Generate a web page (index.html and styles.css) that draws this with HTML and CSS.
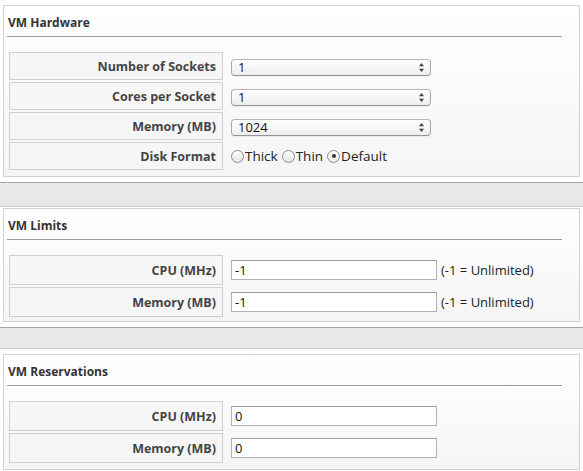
FILE: index.html
```html
<!DOCTYPE html>
<html>
<head>
<meta charset="utf-8">
<link rel="stylesheet" href="styles.css">
</head>
<body>
<div class="section first">
  <div class="panel">
    <div class="heading">VM Hardware</div>
    <table class="form hw">
      <tr>
        <td class="label">Number of Sockets</td>
        <td class="value"><span class="sel"><select><option>1</option></select><svg class="arrows" width="5" height="9" viewBox="0 0 5 9"><path d="M2.5 0 L5 3.2 L0 3.2 Z M0 5.8 L5 5.8 L2.5 9 Z" fill="#444"/></svg></span></td>
      </tr>
      <tr>
        <td class="label">Cores per Socket</td>
        <td class="value"><span class="sel"><select><option>1</option></select><svg class="arrows" width="5" height="9" viewBox="0 0 5 9"><path d="M2.5 0 L5 3.2 L0 3.2 Z M0 5.8 L5 5.8 L2.5 9 Z" fill="#444"/></svg></span></td>
      </tr>
      <tr>
        <td class="label">Memory (MB)</td>
        <td class="value"><span class="sel"><select><option>1024</option></select><svg class="arrows" width="5" height="9" viewBox="0 0 5 9"><path d="M2.5 0 L5 3.2 L0 3.2 Z M0 5.8 L5 5.8 L2.5 9 Z" fill="#444"/></svg></span></td>
      </tr>
      <tr>
        <td class="label">Disk Format</td>
        <td class="value radios"><label><input type="radio" name="df">Thick</label><label><input type="radio" name="df">Thin</label><label><input type="radio" name="df" checked>Default</label></td>
      </tr>
    </table>
  </div>
</div>
<div class="section second">
  <div class="panel">
    <div class="heading">VM Limits</div>
    <table class="form tx">
      <tr>
        <td class="label">CPU (MHz)</td>
        <td class="value"><input class="text" type="text" value="-1"><span class="hint">(-1 = Unlimited)</span></td>
      </tr>
      <tr>
        <td class="label">Memory (MB)</td>
        <td class="value"><input class="text" type="text" value="-1"><span class="hint">(-1 = Unlimited)</span></td>
      </tr>
    </table>
  </div>
</div>
<div class="section third">
  <div class="panel">
    <div class="heading">VM Reservations</div>
    <table class="form tx">
      <tr>
        <td class="label">CPU (MHz)</td>
        <td class="value"><input class="text" type="text" value="0"></td>
      </tr>
      <tr>
        <td class="label">Memory (MB)</td>
        <td class="value"><input class="text" type="text" value="0"></td>
      </tr>
    </table>
  </div>
</div>
</body>
</html>
```
FILE: styles.css
```css
html, body {
  margin: 0;
  padding: 0;
}
body {
  background: #e8e8e8;
  font-family: "Open Sans", "DejaVu Sans", sans-serif;
  font-size: 13px;
  color: #333;
  width: 583px;
  height: 471px;
  overflow: hidden;
}
.section {
  background: #fff;
  padding: 5px 3px 5px 3px;
}
.section.first {
  border-bottom: 1px solid #a4a4a4;
}
.section.second {
  margin-top: 23px;
  border-top: 1px solid #cacaca;
  border-bottom: 1px solid #a4a4a4;
  padding-top: 1px;
}
.section.second .panel {
  padding-bottom: 2px;
}
.section.third {
  margin-top: 20px;
  border-top: 1px solid #cacaca;
  padding-top: 5px;
}
.panel {
  border: 1px solid #d2d2d2;
  background: linear-gradient(#ffffff, #f5f5f5);
  padding: 0 3px 4px 3px;
}
.heading {
  font-weight: bold;
  font-size: 12px;
  line-height: 16px;
  color: #333;
  padding: 9px 0 5px 1px;
  margin-right: 14px;
  border-bottom: 1px solid #9a9a9a;
}
.form {
  border-collapse: separate;
  border-spacing: 2px;
  margin-top: 13px;
}
.label {
  width: 206px;
  min-width: 206px;
  border: 1px solid #d0d0d0;
  background: #f6f6f6;
  text-align: right;
  font-weight: bold;
  font-size: 12.5px;
  color: #444;
  padding: 0 6px 0 0;
  white-space: nowrap;
}
.hw .label { height: 26px; }
.tx .label { height: 28px; }
.value {
  padding: 0 0 0 6px;
  white-space: nowrap;
  vertical-align: middle;
}
.sel {
  position: relative;
  display: inline-block;
  vertical-align: middle;
}
.sel select {
  -webkit-appearance: none;
  appearance: none;
  width: 200px;
  height: 17px;
  margin: 0;
  padding: 0 0 0 6px;
  border: 1px solid #a8a8a8;
  border-top-color: #b4b4b4;
  border-bottom-color: #959595;
  border-radius: 4px;
  background: linear-gradient(#ffffff, #ededed);
  font-family: "Open Sans", "DejaVu Sans", sans-serif;
  font-size: 13px;
  line-height: 15px;
  color: #111;
  box-shadow: 0 1px 0 rgba(0,0,0,0.04);
  display: block;
}
.sel .arrows {
  position: absolute;
  right: 7px;
  top: 4px;
  pointer-events: none;
}
.radios {
  display: flex;
  align-items: center;
  gap: 4px;
  height: 28px;
}
.radios label {
  display: inline-flex;
  align-items: center;
  gap: 1px;
  color: #222;
  font-size: 13.5px;
}
.radios input {
  -webkit-appearance: none;
  appearance: none;
  width: 13px;
  height: 13px;
  margin: 0;
  border: 1px solid #8c8c8c;
  border-radius: 50%;
  background: linear-gradient(#fdfdfd, #e6e6e6);
  position: relative;
  box-sizing: border-box;
}
.radios input:checked::after {
  content: "";
  position: absolute;
  left: 3.5px;
  top: 3.5px;
  width: 4px;
  height: 4px;
  border-radius: 50%;
  background: #333;
}
.text {
  box-sizing: border-box;
  width: 206px;
  height: 20px;
  margin: 0;
  padding: 0 3px;
  border: 1px solid #b0b0b0;
  border-top-color: #9c9c9c;
  background: #fff;
  font-family: "Open Sans", "DejaVu Sans", sans-serif;
  font-size: 13px;
  color: #111;
  vertical-align: middle;
}
.hint {
  font-size: 13px;
  color: #222;
  margin-left: 4px;
  vertical-align: middle;
}
```
